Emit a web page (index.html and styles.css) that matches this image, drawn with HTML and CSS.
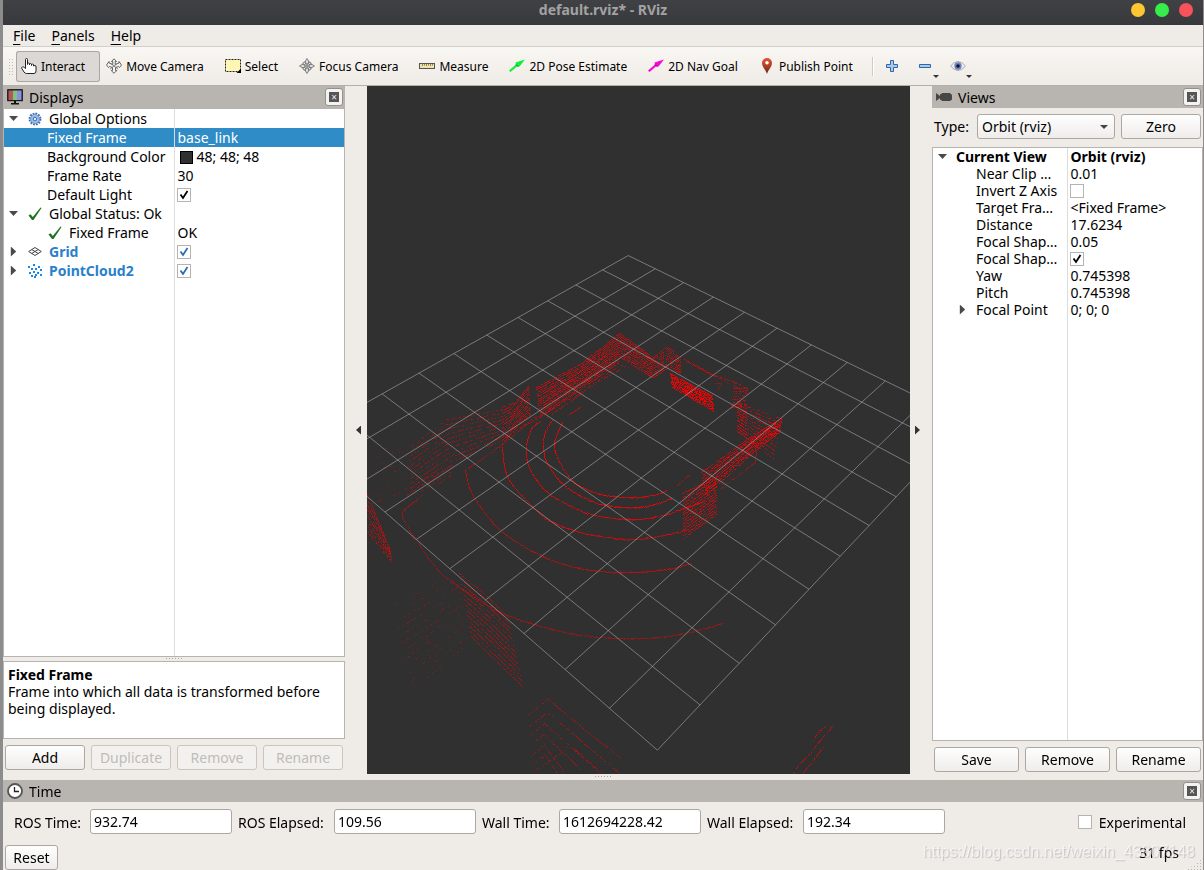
FILE: index.html
```html
<!DOCTYPE html>
<html lang="en">
<head>
<meta charset="utf-8">
<title>default.rviz* - RViz</title>
<link rel="stylesheet" href="styles.css">
</head>
<body>
<div class="window">
  <header class="titlebar">
    <h1 class="title">default.rviz* - RViz</h1>
    <div class="window-controls">
      <button class="dot dot-min" aria-label="Minimize"></button>
      <button class="dot dot-max" aria-label="Maximize"></button>
      <button class="dot dot-close" aria-label="Close"></button>
    </div>
  </header>

  <nav class="menubar">
    <button class="menu"><u>F</u>ile</button>
    <button class="menu"><u>P</u>anels</button>
    <button class="menu"><u>H</u>elp</button>
  </nav>

  <div class="toolbar" role="toolbar">
    <span class="grip"></span>
    <button class="tool active">
      <svg width="16" height="16" viewBox="0 0 16 16"><path d="M4.500 10.500V1.500q0-1 1-1t1 1V6.500V5.500q1-1 2 0V7V6q1-1 2 0V7.500V6.500q1-.8 2 0V8q1.500-1 2.500 0V13q0 2.500-2 2.500H5.500q-1.500 0-2.500-1.500L.800 10.500q-.5-1 .5-1.500t2 .5z" fill="#fff" stroke="#222"/></svg>
      Interact</button>
    <button class="tool">
      <svg width="16" height="16" viewBox="0 0 16 16"><path d="M8 .8L10.500 3.500H9.200V6.500L13 5V3.500L15.500 7L13.500 9.500L12.500 8.500L9.500 9.500V12.500H10.800L8 15.300L5.200 12.500H6.500V9.500L3.500 8.500L2.500 9.500L.5 7L3 3.500V5L6.800 6.500V3.500H5.500z" fill="#f4f4f4" stroke="#555" stroke-width=".9"/><path d="M4 5l8 6M12 5L4 11" stroke="#777" stroke-width=".9"/></svg>
      Move Camera</button>
    <button class="tool">
      <svg width="16" height="16" viewBox="0 0 16 16"><rect x=".5" y="1.500" width="15" height="12" fill="#fff5b5" stroke="#222" stroke-dasharray="2 1"/><path d="M16 10.500V15H11.500z" fill="#000"/></svg>
      Select</button>
    <button class="tool">
      <svg width="16" height="16" viewBox="0 0 16 16" fill="none"><circle cx="8" cy="8" r="4.700" stroke="#777" stroke-width="1.200" fill="#eee"/><path d="M8 .5l1.500 2.500v3h-3V3zM8 15.500l1.500-2.500v-3h-3v3zM.5 8L3 6.500h3v3H3zM15.500 8L13 6.500h-3v3h3z" fill="#ddd" stroke="#777" stroke-width=".9"/><path d="M5 8h6M8 5v6" stroke="#777"/></svg>
      Focus Camera</button>
    <button class="tool">
      <svg width="16" height="16" viewBox="0 0 16 16"><rect x=".5" y="5.500" width="15" height="5" fill="#efe3b0" stroke="#555"/><path d="M3.500 6v2M5.500 6v1.500M7.500 6v2M9.500 6v1.500M11.500 6v2M13.500 6v1.500" stroke="#8d8352"/></svg>
      Measure</button>
    <button class="tool">
      <svg width="16" height="16" viewBox="0 0 16 16"><path d="M0 12.500L7 6.500L6.500 4.500L16 1.500L10.500 8.500L8.500 8L1.500 14z" fill="#0ff03c"/><path d="M7 6.500l2.500 2.500" stroke="#067a1c"/></svg>
      2D Pose Estimate</button>
    <button class="tool">
      <svg width="16" height="16" viewBox="0 0 16 16"><path d="M0 12.500L7 6.500L6.500 4.500L16 1.500L10.500 8.500L8.500 8L1.500 14z" fill="#fa06d8"/><path d="M7 6.500l2.500 2.500" stroke="#80066c"/></svg>
      2D Nav Goal</button>
    <button class="tool">
      <svg width="16" height="16" viewBox="0 0 16 16"><defs><linearGradient id="pin" x1="0" y1="0" x2="0" y2="1"><stop offset="0" stop-color="#e85434"/><stop offset=".55" stop-color="#a93c22"/><stop offset="1" stop-color="#4a2a20"/></linearGradient></defs><path d="M8 16C6.500 11 3 9 3 5a5 5 0 0110 0c0 4-3.500 6-5 11z" fill="url(#pin)"/><circle cx="8" cy="4.800" r="1.800" fill="#fff"/></svg>
      Publish Point</button>
    <span class="separator"></span>
    <button class="icon-tool" aria-label="Add tool"><svg width="16" height="16" viewBox="0 0 16 16"><path d="M6.500 2.500h3v4h4v3h-4v4h-3v-4h-4v-3h4z" fill="#a9cbea" stroke="#2f66a8"/></svg></button>
    <button class="icon-tool drop" aria-label="Remove tool"><svg width="16" height="16" viewBox="0 0 16 16"><path d="M2.500 6.500h11v3h-11z" fill="#a9cbea" stroke="#2f66a8"/></svg></button>
    <button class="icon-tool drop" aria-label="Tool visibility"><svg width="16" height="16" viewBox="0 0 16 16"><path d="M.5 8Q4 3.500 8 3.500T15.500 8Q12 12.500 8 12.500T.5 8z" fill="#eee" stroke="#aaa"/><circle cx="8" cy="8" r="3.700" fill="#6d80bf"/><circle cx="8" cy="8" r="1.800" fill="#101430"/></svg></button>
  </div>

  <main class="workspace">
    <section class="dock dock-left">
      <div class="dock-title">
        <svg width="16" height="16" viewBox="0 0 16 16"><rect x=".7" y=".7" width="14.600" height="11" fill="#222" stroke="#111"/><rect x="1.500" y="1.500" width="4.500" height="9.500" fill="#b4585c"/><rect x="6" y="1.500" width="4" height="9.500" fill="#7cc47c"/><rect x="10" y="1.500" width="4.500" height="9.500" fill="#8f8fe0"/><path d="M7 12h2v2h3v1.500H4V14h3z" fill="#111"/></svg>
        <h2>Displays</h2>
        <button class="dock-close" aria-label="Close Displays"></button>
      </div>
      <div class="tree-box">
        <table class="tree tree-displays">
          <colgroup><col class="col-name"><col></colgroup>
          <tbody>
          <tr><td><div class="cell"><i class="arrow open"></i><svg class="row-icon" width="14" height="14" viewBox="0 0 14 14"><circle cx="7" cy="7" r="5.200" fill="none" stroke="#3a6cb4" stroke-width="2.400" stroke-dasharray="1.700 1"/><circle cx="7" cy="7" r="4.500" fill="#9dbfe6" stroke="#6b98d0"/><circle cx="7" cy="7" r="1.800" fill="#dce9f7" stroke="#3f74b8"/></svg>Global Options</div></td><td></td></tr>
          <tr class="selected"><td><div class="cell leaf">Fixed Frame</div></td><td>base_link</td></tr>
          <tr><td><div class="cell leaf">Background Color</div></td><td><span class="swatch"></span>48; 48; 48</td></tr>
          <tr><td><div class="cell leaf">Frame Rate</div></td><td>30</td></tr>
          <tr><td><div class="cell leaf"><label for="light">Default Light</label></div></td><td class="check-cell"><input id="light" class="check" type="checkbox" checked></td></tr>
          <tr><td><div class="cell"><i class="arrow open"></i><svg class="row-icon" width="14" height="14" viewBox="0 0 14 14"><path d="M.5 8.500L2.500 7.300L4.800 10L12.500.5L13.500 1L5.500 13H4z" fill="#1c7420"/></svg>Global Status: Ok</div></td><td></td></tr>
          <tr><td><div class="cell nested"><svg class="row-icon" width="14" height="14" viewBox="0 0 14 14"><path d="M.5 8.500L2.500 7.300L4.800 10L12.500.5L13.500 1L5.500 13H4z" fill="#1c7420"/></svg>Fixed Frame</div></td><td>OK</td></tr>
          <tr><td><div class="cell display"><i class="arrow"></i><svg class="row-icon" width="14" height="14" viewBox="0 0 14 14" fill="none" stroke="#444"><path d="M7 2.500L13.300 6.500L7 10.500L.7 6.500zM3.800 4.500l6.400 4M10.200 4.500l-6.400 4"/></svg><label for="grid">Grid</label></div></td><td class="check-cell"><input id="grid" class="check blue" type="checkbox" checked></td></tr>
          <tr><td><div class="cell display"><i class="arrow"></i><svg class="row-icon" width="14" height="14" viewBox="0 0 14 14" fill="#1787ea"><path d="M0 2h2v2H0zM5 0h2v2H5zM10 2h2v2h-2zM3 4h2v2H3zM7 4h2v2H7zM12 5h2v2h-2zM1 8h2v2H1zM5 7h2v2H5zM9 8h2v2H9zM3 11h2v2H3zM7 10h2v2H7zM12 10h2v2h-2zM6 12h2v2H6z"/></svg><label for="cloud">PointCloud2</label></div></td><td class="check-cell"><input id="cloud" class="check blue" type="checkbox" checked></td></tr>
          <tr class="filler"><td></td><td></td></tr>
          </tbody>
        </table>
      </div>
      <div class="splitter"></div>
      <div class="help-box"><strong>Fixed Frame</strong><p>Frame into which all data is transformed before being displayed.</p></div>
      <div class="button-row">
        <button class="btn">Add</button>
        <button class="btn" disabled>Duplicate</button>
        <button class="btn" disabled>Remove</button>
        <button class="btn" disabled>Rename</button>
      </div>
    </section>

    <button class="collapse collapse-left" aria-label="Collapse left panel"></button>
    <div class="viewport"><canvas id="scene" class="scene" role="img" aria-label="Grid and point cloud"></canvas></div>
    <button class="collapse collapse-right" aria-label="Collapse right panel"></button>

    <section class="dock dock-right">
      <div class="dock-title">
        <svg width="16" height="16" viewBox="0 0 16 16" fill="#464646"><path d="M0 4l4 3V5.500L6.500 4H14l2 2v4.500L14 12H6.500L4 10.500V9l-4 3z"/></svg>
        <h2>Views</h2>
        <button class="dock-close" aria-label="Close Views"></button>
      </div>
      <div class="type-row">
        <label for="type">Type:</label>
        <select id="type" class="combo"><option>Orbit (rviz)</option></select>
        <button class="btn zero">Zero</button>
      </div>
      <div class="tree-box">
        <table class="tree tree-views">
          <colgroup><col class="col-name"><col></colgroup>
          <tbody>
          <tr class="bold"><td><div class="cell"><i class="arrow open"></i>Current View</div></td><td>Orbit (rviz)</td></tr>
          <tr><td><div class="cell leaf">Near Clip …</div></td><td>0.01</td></tr>
          <tr><td><div class="cell leaf"><label for="invert">Invert Z Axis</label></div></td><td class="check-cell"><input id="invert" class="check" type="checkbox"></td></tr>
          <tr><td><div class="cell leaf">Target Fra…</div></td><td>&lt;Fixed Frame&gt;</td></tr>
          <tr><td><div class="cell leaf">Distance</div></td><td>17.6234</td></tr>
          <tr><td><div class="cell leaf">Focal Shap…</div></td><td>0.05</td></tr>
          <tr><td><div class="cell leaf"><label for="focal">Focal Shap…</label></div></td><td class="check-cell"><input id="focal" class="check" type="checkbox" checked></td></tr>
          <tr><td><div class="cell leaf">Yaw</div></td><td>0.745398</td></tr>
          <tr><td><div class="cell leaf">Pitch</div></td><td>0.745398</td></tr>
          <tr><td><div class="cell branch"><i class="arrow"></i>Focal Point</div></td><td>0; 0; 0</td></tr>
          <tr class="filler"><td></td><td></td></tr>
          </tbody>
        </table>
      </div>
      <div class="button-row">
        <button class="btn">Save</button>
        <button class="btn">Remove</button>
        <button class="btn">Rename</button>
      </div>
    </section>
  </main>

  <div class="splitter wide"></div>
  <section class="time">
    <div class="dock-title">
      <svg width="16" height="16" viewBox="0 0 16 16"><circle cx="8" cy="8" r="7" fill="#fff" stroke="#555" stroke-width="1.800"/><path d="M7.500 4v4.500H12" fill="none" stroke="#222" stroke-width="1.300"/></svg>
      <h2>Time</h2>
      <button class="dock-close" aria-label="Close Time"></button>
    </div>
    <div class="time-fields">
      <label for="ros-time">ROS Time:</label><input id="ros-time" class="field" type="text" value="932.74">
      <label for="ros-elapsed">ROS Elapsed:</label><input id="ros-elapsed" class="field" type="text" value="109.56">
      <label for="wall-time">Wall Time:</label><input id="wall-time" class="field" type="text" value="1612694228.42">
      <label for="wall-elapsed">Wall Elapsed:</label><input id="wall-elapsed" class="field" type="text" value="192.34">
      <label class="experimental"><input class="check" type="checkbox">Experimental</label>
    </div>
  </section>
  <footer class="statusbar">
    <button class="btn reset">Reset</button>
    <span class="fps">31 fps</span>
    <span class="size-grip"></span>
  </footer>
  <span class="watermark">https://blog.csdn.net/weixin_43807148</span>
</div>
<script src="scene.js"></script>
</body>
</html>
```
FILE: styles.css
```css
* { box-sizing: border-box; }
body { margin: 0; background: #a5a5a6; }
body, button, input, select { font-family: "Noto Sans", "Open Sans", sans-serif; font-size: 14px; line-height: 17px; color: #000; }
button { padding: 0; border: 0; background: none; }
h1, h2, p { margin: 0; font-size: inherit; font-weight: normal; }

.window { position: relative; display: flex; flex-direction: column; height: 100vh; background: #efebe7; border-left: 3px solid #8d8c8d; border-right: 1px solid #8f8c8b; overflow: hidden; }

.titlebar { display: grid; grid-template-columns: 1fr auto 1fr; align-items: center; flex: none; height: 25px; padding: 0 10px 6px; background: linear-gradient(#404145, #38393d); }
.title { grid-column: 2; font-weight: bold; color: #a3a3a3; }
.window-controls { display: flex; justify-content: flex-end; gap: 10px; }
.dot { width: 14px; height: 14px; border-radius: 50%; }
.dot-min { background: #fdc832; }
.dot-max { background: #35ed4b; }
.dot-close { background: #f8525a; }

.menubar { display: flex; flex: none; gap: 16px; height: 22px; padding-left: 10px; border-bottom: 1px solid #d2cfca; }
.menu u { text-underline-offset: 3px; }

.toolbar { display: flex; flex: none; align-items: center; gap: 1px; height: 39px; padding-left: 5px; background: linear-gradient(#f9f7f3, #efebe7); border-bottom: 1px solid #b3afab; }
.grip { width: 6px; height: 17px; margin-right: 1px; background: radial-gradient(circle, #bdb9b4 1px, transparent 1px) 0 0 / 3px 3px; }
.tool { display: flex; align-items: center; gap: 4px; height: 31px; padding: 0 15px 0 5px; font-size: 12px; white-space: nowrap; border-radius: 3px; }
.tool.active { background: #dcd8d5; box-shadow: inset 0 0 0 1px #aaa6a2; }
.tool svg { flex: none; }
.separator { width: 2px; height: 19px; margin: 0 9px 0 3px; border-left: 1px solid #cfcbc6; border-right: 1px solid #fff; }
.icon-tool { position: relative; width: 32px; height: 31px; text-align: left; }
.icon-tool svg { display: block; }
.icon-tool.drop::after { content: ""; position: absolute; left: 16px; bottom: 4px; border: 3px solid transparent; border-top-color: #333; border-bottom: 0; }

.workspace { display: flex; flex: 1; min-height: 0; }
.dock { display: flex; flex-direction: column; }
.dock-left { width: 342px; }
.dock-right { width: 271px; }
.dock-title { display: flex; flex: none; align-items: center; gap: 6px; height: 22px; padding: 0 2px 0 4px; background: #b8b4b0; }
.dock-title h2 { flex: 1; }
.dock-close { display: grid; place-items: center; width: 18px; height: 18px; border: 1px solid #94908c; border-radius: 3px; background: #f5f3f1; }
.dock-close::after { content: "×"; width: 10px; height: 10px; background: #555; color: #eee; font-size: 10px; line-height: 10px; }

.tree-box { flex: 1; min-height: 0; background: #fff; border: 1px solid #b7b3af; }
.tree { width: 100%; height: 100%; border-collapse: collapse; table-layout: fixed; }
.tree td { padding: 0 0 0 3px; white-space: nowrap; overflow: hidden; vertical-align: middle; }
.tree td:first-child { padding: 0; border-right: 1px solid #dcdcdc; }
.tree .check-cell { padding-left: 2px; }
.cell { display: flex; align-items: center; }
.row-icon { flex: none; }
.arrow { flex: none; width: 9px; height: 10px; background: #4a4a4a; clip-path: polygon(20% 0, 80% 50%, 20% 100%); }
.arrow.open { height: 5px; clip-path: polygon(0 0, 100% 0, 50% 100%); }
.swatch { display: inline-block; width: 13px; height: 13px; margin: 0 4px 0 2px; vertical-align: -2px; background: #303030; border: 1px solid #000; }
.selected { background: #308cc6; color: #fff; }
.bold { font-weight: bold; }
.check { appearance: none; display: block; flex: none; width: 14px; height: 14px; margin: 0; border: 1px solid #b6b3b0; background: #fff; }
.check:checked { background: #fff url("data:image/svg+xml,%3Csvg xmlns='http://www.w3.org/2000/svg' viewBox='0 0 12 12'%3E%3Cpath d='M2.500 5.500L5 9L9.500 2' fill='none' stroke='%23000' stroke-width='1.800'/%3E%3C/svg%3E"); }
.check.blue:checked { background-image: url("data:image/svg+xml,%3Csvg xmlns='http://www.w3.org/2000/svg' viewBox='0 0 12 12'%3E%3Cpath d='M2.500 5.500L5 9L9.500 2' fill='none' stroke='%232a6cb0' stroke-width='1.800'/%3E%3C/svg%3E"); }

.tree-displays .col-name { width: 170px; }
.tree-displays tr { height: 19px; }
.tree-displays .cell { padding-left: 5px; }
.tree-displays .arrow { margin-right: 10px; }
.tree-displays .row-icon { margin-right: 7px; }
.tree-displays .leaf { padding-left: 43px; }
.tree-displays .nested { padding-left: 44px; }
.display { font-weight: bold; color: #2a7fcb; }

.tree-views .col-name { width: 134px; }
.tree-views tr { height: 17px; }
.tree-views .cell { padding-left: 5px; }
.tree-views .arrow { margin-right: 9px; }
.tree-views .leaf { padding-left: 43px; }
.tree-views .branch { padding-left: 25px; }
.tree tr.filler { height: auto; }

.splitter { flex: none; height: 4px; padding-top: 1px; }
.splitter::before { content: ""; display: block; width: 17px; height: 1px; margin: 0 auto; background: repeating-linear-gradient(90deg, #aaa6a2 0 1px, transparent 1px 3px); }
.splitter.wide { height: 6px; padding-top: 2px; }
.help-box { flex: none; height: 78px; padding: 4px; background: #fff; border: 1px solid #b7b3af; }
.help-box strong { display: block; }

.button-row { display: flex; flex: none; gap: 6px; padding: 6px 2px 4px; }
.btn { flex: 1; height: 25px; border: 1px solid #aba7a3; border-radius: 3px; background: linear-gradient(#fefefe, #efedeb); }
.btn:disabled { color: #bfbcb9; border-color: #c9c5c1; background: #f3f1ee; }
.dock-right .button-row { padding: 6px 2px 2px; }

.collapse { flex: none; width: 22px; display: flex; align-items: center; }
.collapse::after { content: ""; width: 5px; height: 9px; background: #333; }
.collapse-left { justify-content: flex-end; padding-right: 6px; }
.collapse-left::after { clip-path: polygon(100% 0, 0 50%, 100% 100%); }
.collapse-right { padding-left: 5px; }
.collapse-right::after { clip-path: polygon(0 0, 100% 50%, 0 100%); }

.viewport { flex: 1; min-width: 0; background: #303030; overflow: hidden; }
.scene { display: block; width: 100%; height: 100%; }

.type-row { display: grid; grid-template-columns: 37px 138px 1fr; flex: none; align-items: center; column-gap: 6px; padding: 6px 2px 8px; }
.combo { appearance: none; height: 25px; padding: 0 4px; border: 1px solid #aba7a3; border-radius: 3px; background: url("data:image/svg+xml,%3Csvg xmlns='http://www.w3.org/2000/svg' width='8' height='4'%3E%3Cpath d='M0 0h8L4 4z' fill='%23444'/%3E%3C/svg%3E") no-repeat right 6px center, linear-gradient(#fefefe, #efedeb); }

.time { flex: none; }
.time-fields { display: grid; grid-template-columns: 70px 142px 90px 142px 71px 142px 90px 142px 1fr; align-items: center; column-gap: 6px; padding: 7px 17px 10px 11px; white-space: nowrap; }
.field { width: 100%; height: 25px; padding: 0 3px; border: 1px solid #aba7a3; border-radius: 3px; background: #fff; }
.time-fields label { padding-top: 1px; }
.experimental { display: flex; align-items: center; justify-self: end; gap: 7px; }

.statusbar { display: flex; flex: none; align-items: center; gap: 8px; height: 26px; padding: 0 2px; }
.reset { flex: none; width: 53px; }
.fps { margin-left: auto; align-self: flex-start; }
.size-grip { align-self: flex-end; width: 14px; height: 11px; background: radial-gradient(circle, #b9b5b0 1px, transparent 1px) 0 0 / 3px 3px; clip-path: polygon(100% 0, 100% 100%, 0 100%); }
.watermark { position: absolute; right: 8px; bottom: 8px; font-family: "Liberation Sans", sans-serif; font-size: 16px; line-height: 20px; color: rgba(255, 255, 255, .6); text-shadow: 1px 1px 1px rgba(120, 120, 120, .35); pointer-events: none; }
```
FILE: scene.js
```javascript
// Orbit camera, in the same terms as the Views panel.
const camera = { distance: 17.6234, yaw: 0.745398, pitch: 0.745398, fov: Math.PI / 4 };
// Scan traces are stored in pixels of a 543 x 688 view whose origin is (367, 86).
const VIEW = { x: 367, y: 86, w: 543, h: 688 };

// Single traces: [brightness, point density, points].
const traces = [
  [0.9, 1, [[562,422],[556,436],[554,447],[560,463],[574,482],[597,493],[624,497],[647,496],[667,490]]],
  [0.9, 0.9, [[677,485],[690,474]]],
  [0.9, 1, [[552,420],[545,432],[543,445],[547,463],[564,485],[594,502],[624,507],[647,506],[672,498]]],
  [0.8, 1, [[682,493],[703,483],[712,475]]],
  [0.85, 1, [[540,421],[532,427],[527,440],[526,453],[530,470],[547,492],[577,509],[600,516],[624,519],[647,518],[667,514],[683,508],[705,501]]],
  [0.8, 1, [[502,447],[505,470],[514,487],[534,508],[550,521],[584,533],[624,539],[647,538],[673,533],[685,530]]],
  [0.65, 1, [[465,470],[470,490],[482,509],[500,530],[534,552],[567,565],[600,571],[634,572],[667,569],[692,563]]],
  [0.5, 0.9, [[417,500],[402,512],[407,526],[417,542],[440,572],[467,592],[500,612],[534,624],[574,634],[617,638],[647,638],[667,636],[690,632],[723,623]]],
  [0.65, 0.8, [[465,470],[504,443],[525,425],[540,417]]],
  [0.7, 0.6, [[532,427],[560,408],[600,380],[620,369]]],
  [0.7, 0.6, [[502,440],[530,420],[575,396],[619,365],[630,368]]],
  [0.9, 0.9, [[569,414],[582,406]]],
  [0.8, 0.8, [[684,359],[712,374],[730,380],[748,388]]],
  [0.6, 0.6, [[684,360],[715,376],[746,392]]],
  [0.5, 0.9, [[715,383],[721,383],[717,390]]],
  [0.7, 0.7, [[756,449],[755,462],[720,489]]],
  [0.7, 0.6, [[527,715],[548,699],[585,730],[622,759]]],
  [0.7, 0.6, [[529,726],[547,712],[619,773]]],
  [0.7, 0.6, [[530,735],[544,723],[565,742],[600,773]]],
  [0.7, 0.6, [[532,744],[543,734],[584,772]]],
  [0.6, 0.6, [[533,754],[544,745],[564,772]]],
  [0.6, 0.6, [[535,762],[545,755],[557,773]]],
  [0.6, 0.6, [[536,769],[548,762],[570,745],[602,773]]],
  [0.8, 0.7, [[812,742],[817,732],[826,726]]],
  [0.9, 0.7, [[793,773],[799,764],[810,753],[819,741],[833,725]]],
  [0.8, 0.7, [[802,773],[809,765],[825,744]]]
];

// Walls: [lines, brightness, density, upper edge, lower edge].
const walls = [
  [14, 0.88, 0.82, [[536,387],[580,364],[619,333]], [[540,417],[574,393],[619,362]]],
  [11, 0.85, 0.8, [[619,333],[653,357]], [[619,356],[653,378]]],
  [10, 0.8, 0.75, [[653,357],[667,346],[681,358]], [[653,377],[667,368],[681,373]]],
  [12, 1, 0.88, [[670,373],[713,396]], [[672,387],[714,411]]],
  [8, 0.8, 0.65, [[733,388],[748,388]], [[730,408],[747,404]]],
  [12, 0.85, 0.72, [[737,401],[747,406]], [[737,431],[747,438]]],
  [11, 0.75, 0.6, [[737,403],[781,418]], [[737,431],[774,459]]],
  [10, 0.95, 0.85, [[781,418],[750,437],[700,473]], [[780,431],[755,450],[705,496]]],
  [15, 0.9, 0.8, [[683,497],[717,475]], [[683,538],[717,513]]],
  [13, 0.8, 0.78, [[502,407],[515,402],[529,385]], [[502,443],[517,426],[531,413]]],
  [10, 0.65, 0.5, [[444,420],[502,409]], [[455,460],[502,440]]],
  [11, 0.6, 0.5, [[410,447],[444,421]], [[410,492],[456,462]]],
  [4, 0.5, 0.4, [[404,490],[454,463]], [[404,508],[454,472]]],
  [9, 0.5, 0.1, [[367,452],[410,444]], [[367,505],[414,487]]],
  [8, 0.7, 0.7, [[367,494],[390,550]], [[367,531],[392,563]]],
  [3, 0.4, 0.08, [[367,540],[390,560]], [[367,575],[385,570]]],
  [13, 0.65, 0.75, [[459,573],[485,594],[509,618]], [[471,636],[495,660],[523,687]]],
  [12, 0.55, 0.2, [[392,605],[457,573]], [[410,690],[472,640]]]
];

let seed = 7;
function random() {
  seed = (seed * 16807) % 2147483647;
  return seed / 2147483647;
}

function draw() {
  const canvas = document.getElementById("scene");
  const w = canvas.width = canvas.clientWidth;
  const h = canvas.height = canvas.clientHeight;
  const ctx = canvas.getContext("2d");
  const scale = h / VIEW.h;
  seed = 7;

  function dot(x, y, strength) {
    const px = Math.round(w / 2 + (x - VIEW.x - VIEW.w / 2) * scale);
    const py = Math.round(h / 2 + (y - VIEW.y - VIEW.h / 2) * scale);
    ctx.fillStyle = `rgba(255,0,0,${strength * (0.6 + 0.4 * random())})`;
    ctx.fillRect(px, py, 1, 1);
  }

  function trace(line, strength, density, jitter) {
    for (let i = 0; i + 1 < line.length; i++) {
      const [a, b] = [line[i], line[i + 1]];
      const steps = Math.max(1, Math.round(Math.max(Math.abs(b[0] - a[0]), Math.abs(b[1] - a[1]))));
      for (let s = 0; s < steps; s++) {
        if (random() > density) continue;
        const t = s / steps;
        dot(a[0] + (b[0] - a[0]) * t, a[1] + (b[1] - a[1]) * t + (random() - 0.5) * jitter, strength);
      }
    }
  }

  // Rounds off the corners of a sampled ring.
  function smooth(p) {
    if (p.length < 7) return p;
    const out = [];
    for (let i = 0; i + 1 < p.length; i++) {
      const a = p[Math.max(i - 1, 0)], b = p[i], c = p[i + 1], d = p[Math.min(i + 2, p.length - 1)];
      for (let s = 0; s < 6; s++) {
        const t = s / 6;
        out.push([0, 1].map(k => 0.5 * (2 * b[k] + (c[k] - a[k]) * t + (2 * a[k] - 5 * b[k] + 4 * c[k] - d[k]) * t * t + (3 * b[k] - a[k] - 3 * c[k] + d[k]) * t * t * t)));
      }
    }
    out.push(p[p.length - 1]);
    return out;
  }

  traces.forEach(([strength, density, line]) => {
    trace(smooth(line), strength, density, 0.9);
    if (line.length > 7) trace(smooth(line), strength, 0.4, 1.6);
  });
  walls.forEach(([lines, strength, density, top, bottom]) => {
    for (let n = 0; n < lines; n++) {
      const f = n / (lines - 1);
      const line = top.map((a, i) => [a[0] + (bottom[i][0] - a[0]) * f, a[1] + (bottom[i][1] - a[1]) * f]);
      trace(line, strength, density, 0.5);
    }
  });

  const focal = h / 2 / Math.tan(camera.fov / 2);
  function project(x, y) {
    const side = y * Math.cos(camera.yaw) - x * Math.sin(camera.yaw);
    const toward = x * Math.cos(camera.yaw) + y * Math.sin(camera.yaw);
    const depth = camera.distance - toward * Math.cos(camera.pitch);
    return [w / 2 + focal * side / depth, h / 2 + focal * toward * Math.sin(camera.pitch) / depth];
  }

  ctx.strokeStyle = "rgba(170,170,174,.6)";
  ctx.lineWidth = 1;
  for (let i = -5; i <= 5; i++) {
    for (const [a, b] of [[project(i, -5), project(i, 5)], [project(-5, i), project(5, i)]]) {
      ctx.beginPath();
      ctx.moveTo(...a);
      ctx.lineTo(...b);
      ctx.stroke();
    }
  }
}

draw();
window.addEventListener("resize", draw);
```
